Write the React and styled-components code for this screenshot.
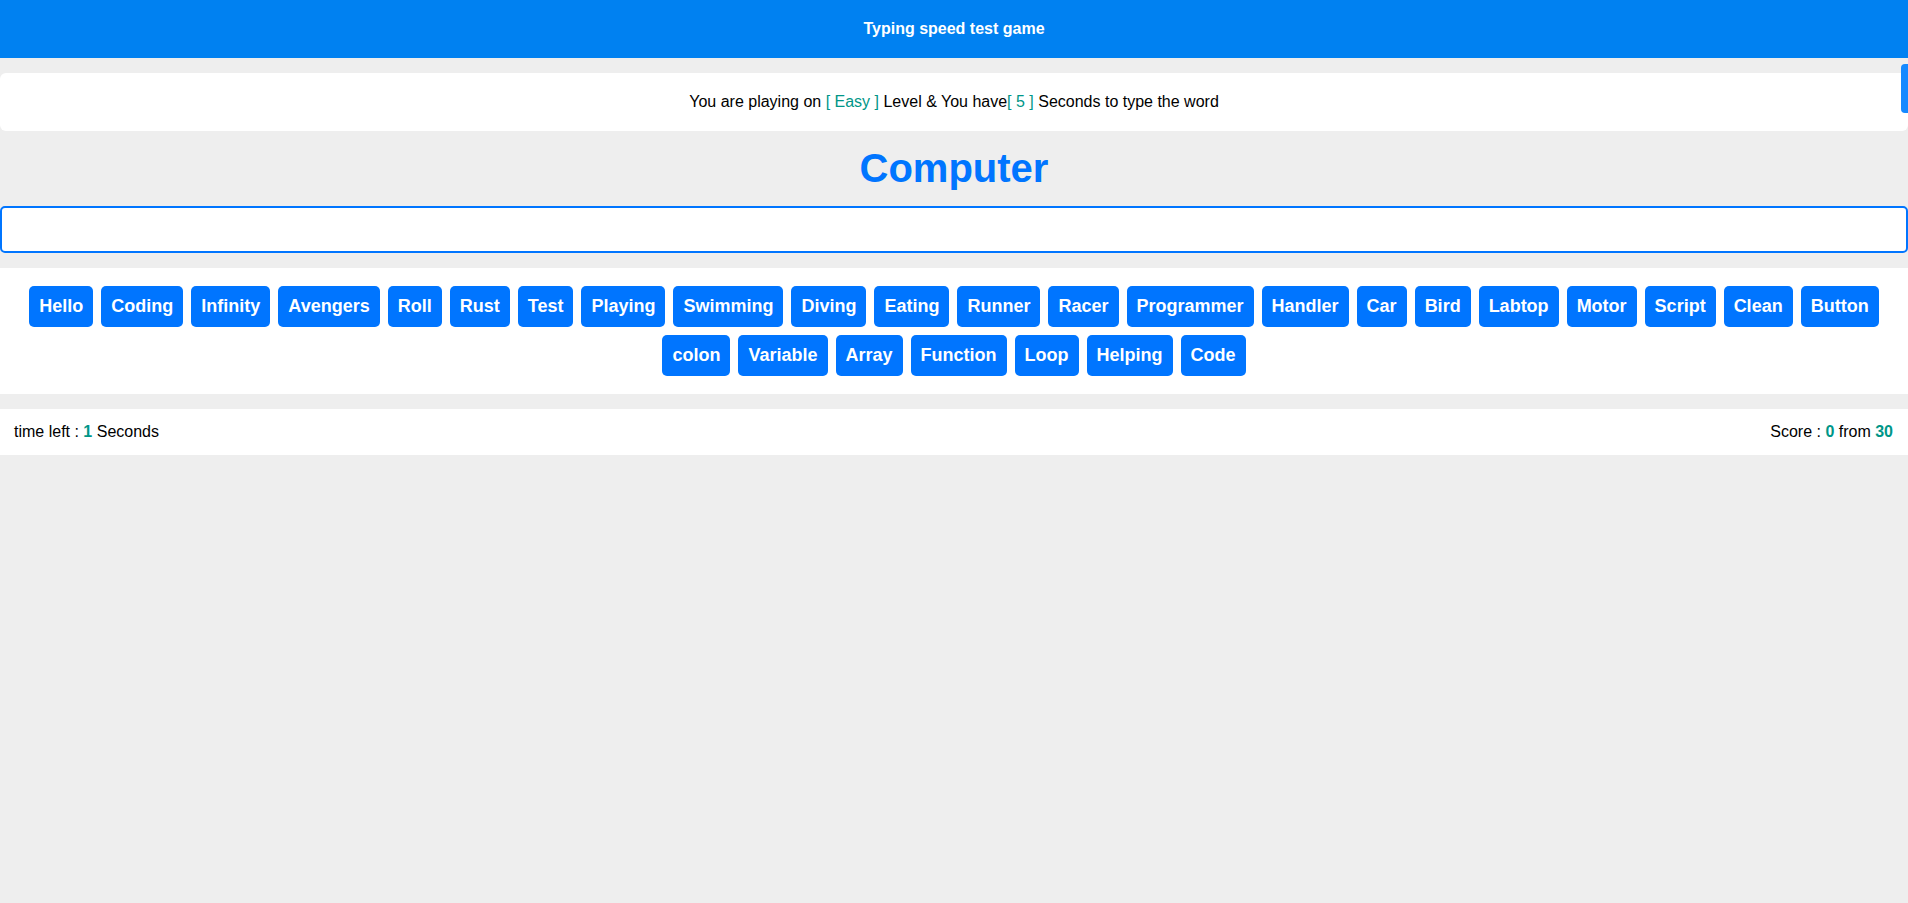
import React from 'react';
import styled, { createGlobalStyle } from 'styled-components';

const words = [
  'Hello', 'Coding', 'Infinity', 'Avengers', 'Roll', 'Rust', 'Test', 'Playing',
  'Swimming', 'Diving', 'Eating', 'Runner', 'Racer', 'Programmer', 'Handler',
  'Car', 'Bird', 'Labtop', 'Motor', 'Script', 'Clean', 'Button', 'colon',
  'Variable', 'Array', 'Function', 'Loop', 'Helping', 'Code'
];

const GlobalStyle = createGlobalStyle`
  * {
    box-sizing: border-box;
  }
  body {
    margin: 0;
    background-color: #eeeeee;
    font-family: "Liberation Sans", Arial, sans-serif;
    color: #000;
  }
`;

const Header = styled.div`
  background-color: #0081f1;
  color: #fff;
  text-align: center;
  font-weight: bold;
  font-size: 16px;
  padding: 20px;
  line-height: 18px;
`;

const Message = styled.div`
  background-color: #fff;
  margin-top: 15px;
  padding: 20px;
  text-align: center;
  font-size: 16px;
  line-height: 18px;
  border-radius: 6px;
`;

const Accent = styled.span`
  color: #009688;
  font-weight: ${props => (props.bold ? 'bold' : 'normal')};
`;

const TheWord = styled.div`
  color: #0075ff;
  text-align: center;
  font-size: 40px;
  font-weight: bold;
  line-height: 75px;
`;

const Input = styled.input`
  display: block;
  width: 100%;
  height: 47px;
  border: 2px solid #0075ff;
  border-radius: 5px;
  outline: none;
  background: #fff;
  padding: 0 12px;
  font-size: 18px;
  font-family: inherit;
`;

const WordsBox = styled.div`
  background-color: #fff;
  margin-top: 15px;
  padding: 18px 20px;
  display: flex;
  flex-wrap: wrap;
  justify-content: center;
  gap: 8px;
`;

const Word = styled.span`
  background-color: #0075ff;
  color: #fff;
  font-weight: bold;
  font-size: 18px;
  line-height: 21px;
  padding: 10px;
  border-radius: 5px;
`;

const Control = styled.div`
  background-color: #fff;
  margin-top: 15px;
  padding: 14px 15px 14px 14px;
  display: flex;
  justify-content: space-between;
  font-size: 16px;
  line-height: 18px;
`;

const ScrollThumb = styled.div`
  position: fixed;
  top: 64px;
  right: 0;
  width: 7px;
  height: 49px;
  border-radius: 4px 0 0 4px;
  background-color: #1589ff;
`;

export default function App() {
  return (
    <>
      <GlobalStyle />
      <Header>Typing speed test game</Header>
      <Message>
        You are playing on <Accent>[ Easy ]</Accent> Level &amp; You have
        <Accent>[ 5 ]</Accent> Seconds to type the word
      </Message>
      <TheWord>Computer</TheWord>
      <Input type="text" />
      <WordsBox>
        {words.map(w => (
          <Word key={w}>{w}</Word>
        ))}
      </WordsBox>
      <Control>
        <span>
          time left : <Accent bold>1</Accent> Seconds
        </span>
        <span>
          Score : <Accent bold>0</Accent> from <Accent bold>30</Accent>
        </span>
      </Control>
      <ScrollThumb />
    </>
  );
}
